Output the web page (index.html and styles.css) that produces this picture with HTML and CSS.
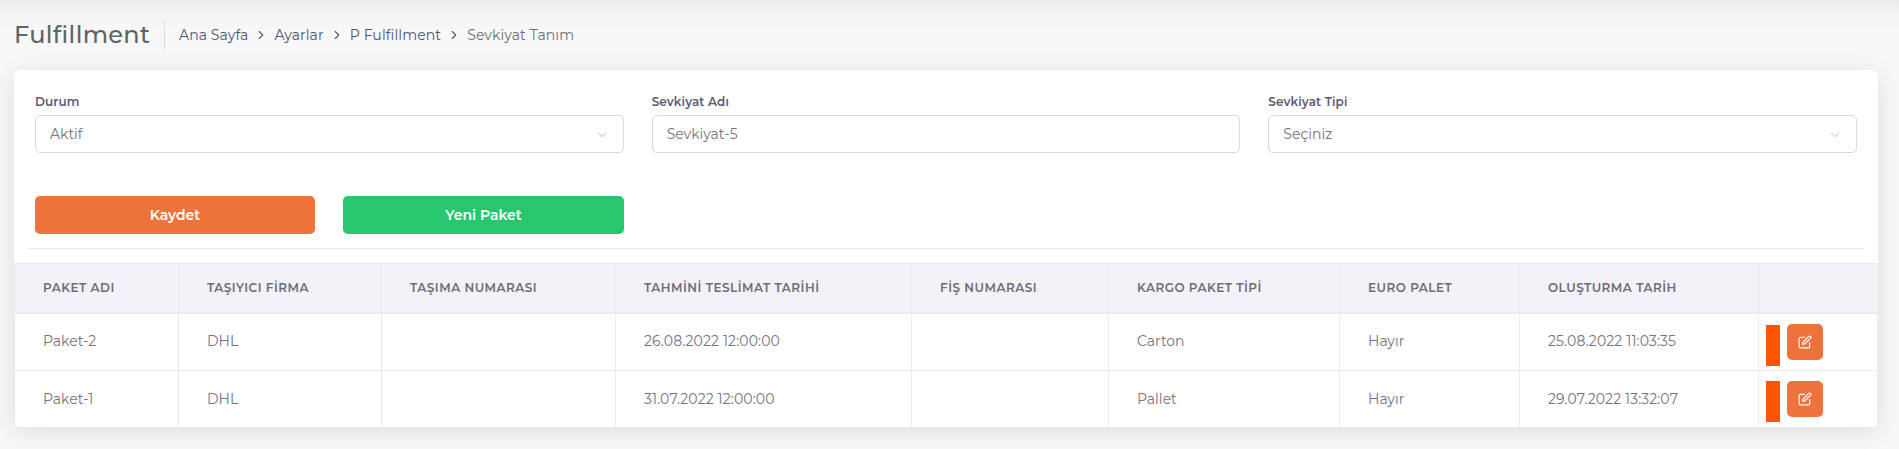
FILE: index.html
```html
<!DOCTYPE html>
<html lang="tr">
<head>
<meta charset="utf-8">
<title>Fulfillment</title>
<link rel="stylesheet" href="styles.css">
</head>
<body>
<svg class="defs" width="0" height="0" aria-hidden="true">
  <symbol id="right" viewBox="0 0 24 24"><path d="M9 18l6-6-6-6"/></symbol>
  <symbol id="down" viewBox="0 0 24 24"><path d="M6 9l6 6 6-6"/></symbol>
  <symbol id="edit" viewBox="0 0 24 24"><path d="M11 4H4a2 2 0 0 0-2 2v14a2 2 0 0 0 2 2h14a2 2 0 0 0 2-2v-7"/><path d="M18.500 2.500a2.121 2.121 0 0 1 3 3L12 15l-4 1 1-4 9.500-9.500z"/></symbol>
</svg>
<header class="page-head">
  <h1 class="title">Fulfillment</h1>
  <nav class="crumbs">
    <a class="crumb">Ana Sayfa</a><svg class="sep"><use href="#right"/></svg>
    <a class="crumb">Ayarlar</a><svg class="sep"><use href="#right"/></svg>
    <a class="crumb">P Fulfillment</a><svg class="sep"><use href="#right"/></svg>
    <span class="crumb current">Sevkiyat Tanım</span>
  </nav>
</header>
<main class="card">
  <form class="fields">
    <div class="field"><label class="label">Durum</label><div class="control"><span>Aktif</span><svg class="caret"><use href="#down"/></svg></div></div>
    <div class="field"><label class="label">Sevkiyat Adı</label><div class="control"><span>Sevkiyat-5</span></div></div>
    <div class="field"><label class="label">Sevkiyat Tipi</label><div class="control"><span>Seçiniz</span><svg class="caret"><use href="#down"/></svg></div></div>
  </form>
  <div class="actions">
    <button class="btn btn-save">Kaydet</button>
    <button class="btn btn-new">Yeni Paket</button>
  </div>
  <hr class="rule">
  <table class="grid">
    <colgroup><col class="c1"><col class="c2"><col class="c3"><col class="c4"><col class="c5"><col class="c6"><col class="c7"><col class="c8"><col class="c9"></colgroup>
    <thead><tr><th>PAKET ADI</th><th>TAŞIYICI FİRMA</th><th>TAŞIMA NUMARASI</th><th>TAHMİNİ TESLİMAT TARİHİ</th><th>FİŞ NUMARASI</th><th>KARGO PAKET TİPİ</th><th>EURO PALET</th><th>OLUŞTURMA TARİH</th><th></th></tr></thead>
    <tbody>
      <tr><td>Paket-2</td><td>DHL</td><td></td><td class="date">26.08.2022 12:00:00</td><td></td><td>Carton</td><td>Hayır</td><td class="date">25.08.2022 11:03:35</td><td class="tools"><div class="tool-row"><span class="bar"></span><button class="edit"><svg><use href="#edit"/></svg></button></div></td></tr>
      <tr class="last"><td>Paket-1</td><td>DHL</td><td></td><td class="date">31.07.2022 12:00:00</td><td></td><td>Pallet</td><td>Hayır</td><td class="date">29.07.2022 13:32:07</td><td class="tools"><div class="tool-row second"><span class="bar"></span><button class="edit"><svg><use href="#edit"/></svg></button></div></td></tr>
    </tbody>
  </table>
</main>
</body>
</html>
```
FILE: styles.css
```css
* { box-sizing: border-box; }
body {
  margin: 0; height: 449px; padding: 0 21px 0 14px; overflow: hidden;
  background: linear-gradient(#e9ecea 0, #f1f2f1 9px, #f5f5f5 18px, #f8f8f8 30px);
  font: 400 14px/20px Montserrat, Inter, "Open Sans", sans-serif;
  color: #757281;
}
svg { fill: none; stroke: currentColor; stroke-width: 2; stroke-linecap: round; stroke-linejoin: round; }
.defs { display: none; }
.page-head { display: flex; align-items: center; height: 70px; }
.title { margin: 0; width: 151px; height: 28px; font-size: 24px; line-height: 28px; font-weight: 500; letter-spacing: .33px; color: #636363; border-right: 1px solid #d6dce1; }
.crumbs { display: flex; align-items: center; padding-left: 14px; }
.crumb { color: #4c5475; white-space: nowrap; letter-spacing: .11px; }
.current { color: #6e6b7b; }
.sep { width: 14px; height: 14px; margin: 0 6px; color: #5e5873; }
.card { height: 358px; background: #fff; border-radius: 6px; box-shadow: 0 4px 24px rgba(34, 41, 47, .12); overflow: hidden; overflow: clip; }
.fields { display: grid; grid-template-columns: repeat(3, 1fr); gap: 28px; margin: 0; padding: 23px 21px 0; }
.label { display: block; height: 22px; font-size: 12px; line-height: 18px; font-weight: 600; color: #5e5873; letter-spacing: .12px; }
.control { display: flex; align-items: center; justify-content: space-between; height: 38px; padding: 0 14px; border: 1px solid #d8d6de; border-radius: 5px; }
.caret { width: 14px; height: 14px; color: #d8d6de; position: relative; top: 1px; }
.actions { display: grid; grid-template-columns: 280px 281px; gap: 28px; padding: 43px 21px 0; }
.btn { height: 38px; border: 0; border-radius: 5px; color: #fff; font: inherit; font-weight: 600; }
.btn-save { background: #ee733b; }
.btn-new { background: #28c76f; }
.rule { margin: 14px 14px 14px; border: 0; border-top: 1px solid #ebe9f1; }
.grid { width: 1864px; table-layout: fixed; border-collapse: separate; border-spacing: 0; border-right: 1px solid #ebe9f1; }
.c1 { width: 164px; } .c2 { width: 203px; } .c3 { width: 234px; }
.c4 { width: 296px; } .c5 { width: 197px; } .c6 { width: 231px; }
.c7 { width: 180px; } .c8 { width: 239px; } .c9 { width: 119px; }
.grid th, .grid td { padding: 0 0 0 28px; border-left: 1px solid #ebe9f1; border-bottom: 1px solid #ebe9f1; text-align: left; white-space: nowrap; }
.grid th { height: 51px; background: #f3f2f7; border-top: 1px solid #ebe9f1; border-bottom-width: 2px; font-size: 12px; font-weight: 600; letter-spacing: .5px; color: #6e6b7b; }
.grid td { height: 57px; padding-bottom: 2px; }
.grid .last td { padding-bottom: 0; }
.grid .date { letter-spacing: .12px; }
.grid .tools { padding: 0 0 0 7px; }
.tool-row { display: flex; align-items: flex-start; gap: 7px; height: 37px; }
.bar { width: 14px; height: 41px; margin-top: 1px; background: #ff5500; }
.second .bar { margin-top: 0; }
.edit { display: grid; place-items: center; width: 36px; height: 36px; padding: 0; border: 0; border-radius: 5px; background: #ee733b; color: #fff; }
.edit svg { width: 14px; height: 14px; }
```
